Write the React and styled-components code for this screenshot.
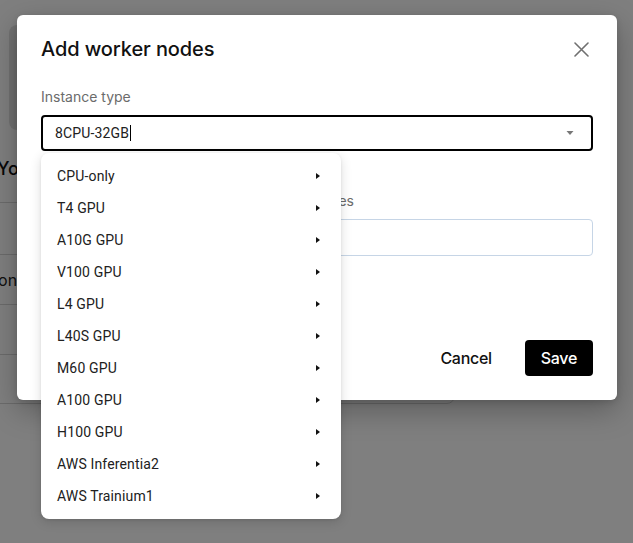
import React from "react";
import styled, { createGlobalStyle } from "styled-components";

const GlobalStyle = createGlobalStyle`
  html, body { margin: 0; padding: 0; }
  body {
    font-family: Inter, "Noto Sans", "Liberation Sans", sans-serif;
    background: #ffffff;
    color: #1a1a1a;
    -webkit-font-smoothing: antialiased;
  }
  * { box-sizing: border-box; }
`;

const Page = styled.div`
  position: relative;
  width: 633px;
  height: 543px;
  overflow: hidden;
  background: #ffffff;
`;

const Backdrop = styled.div`
  display: flex;
  flex-direction: column;
  padding-top: 25px;
`;

const BgCard = styled.div`
  margin-left: 9px;
  width: 300px;
  height: 105px;
  border-radius: 8px;
  background: #e3e3e3;
`;

const BgHeading = styled.h2`
  margin: 27px 0 0 -3px;
  font-size: 18px;
  line-height: 24px;
  font-weight: 500;
  color: #111;
`;

const BgTable = styled.div`
  margin: 21px 0 0 -40px;
  width: 495px;
  border: 1px solid #d6d6d6;
  border-radius: 8px;
  display: flex;
  flex-direction: column;
`;

const BgRow = styled.div`
  height: ${(p) => p.$h}px;
  display: flex;
  align-items: center;
  padding-left: 4px;
  font-size: 16px;
  color: #222;
  border-top: ${(p) => (p.$first ? "none" : "1px solid #d6d6d6")};
`;

const Overlay = styled.div`
  position: absolute;
  inset: 0;
  background: rgba(0, 0, 0, 0.5);
  padding: 15px 0 0 17px;
`;

const Dialog = styled.div`
  position: relative;
  width: 600px;
  background: #ffffff;
  border-radius: 6px;
  box-shadow: 0 10px 30px rgba(0, 0, 0, 0.28), 0 2px 6px rgba(0, 0, 0, 0.12);
  padding: 20px 24px 24px 24px;
  display: flex;
  flex-direction: column;
`;

const Header = styled.div`
  display: flex;
  align-items: center;
  justify-content: space-between;
  height: 28px;
`;

const Title = styled.h1`
  margin: 0;
  font-size: 20px;
  line-height: 28px;
  font-weight: 500;
  color: #111;
  letter-spacing: -0.1px;
`;

const CloseButton = styled.button`
  border: none;
  background: none;
  padding: 0;
  width: 24px;
  height: 24px;
  display: flex;
  align-items: center;
  justify-content: center;
  color: #707070;
  cursor: pointer;
`;

const Field = styled.div`
  display: flex;
  flex-direction: column;
  gap: 8px;
  margin-top: ${(p) => p.$mt}px;
  position: relative;
`;

const Label = styled.label`
  font-size: 14px;
  line-height: 20px;
  color: #6b6b6b;
`;

const SelectBox = styled.div`
  height: 36px;
  border: 2px solid #000;
  border-radius: 4px;
  display: flex;
  align-items: center;
  justify-content: space-between;
  padding: 0 17px 0 12px;
  font-family: Roboto, "Liberation Sans", sans-serif;
  font-size: 14px;
  letter-spacing: 0.15px;
  color: #212121;
`;

const SelectValue = styled.span`
  display: flex;
  align-items: center;
`;

const Caret = styled.span`
  display: inline-block;
  width: 1px;
  height: 16px;
  background: #000;
  margin-left: 1px;
`;

const TextInput = styled.div`
  height: 37px;
  border: 1px solid #c6d5e6;
  border-radius: 4px;
`;

const Footer = styled.div`
  display: flex;
  justify-content: flex-end;
  gap: 16px;
  margin-top: 84px;
`;

const Button = styled.button`
  height: 36px;
  padding: 0 ${(p) => (p.$primary ? 16 : 17)}px;
  border-radius: 4px;
  border: none;
  font-family: Inter, "Liberation Sans", sans-serif;
  font-size: 16px;
  font-weight: 500;
  letter-spacing: -0.3px;
  background: ${(p) => (p.$primary ? "#000" : "transparent")};
  color: ${(p) => (p.$primary ? "#fff" : "#111")};
  cursor: pointer;
`;

const Menu = styled.div`
  position: absolute;
  left: 0;
  top: 66px;
  width: 300px;
  background: #fff;
  border-radius: 8px;
  box-shadow: 0 3px 12px rgba(0, 0, 0, 0.14), 0 1px 3px rgba(0, 0, 0, 0.08);
  padding: 7px 0 7px;
  display: flex;
  flex-direction: column;
  z-index: 5;
`;

const MenuItem = styled.div`
  height: 32px;
  display: flex;
  align-items: center;
  justify-content: space-between;
  padding: 0 21px 0 16px;
  font-family: Roboto, "Liberation Sans", sans-serif;
  font-size: 14px;
  letter-spacing: 0.15px;
  color: #212121;
`;

const SubArrow = styled.span`
  width: 0;
  height: 0;
  border-left: 4px solid #111;
  border-top: 3.5px solid transparent;
  border-bottom: 3.5px solid transparent;
`;

const items = [
  "CPU-only",
  "T4 GPU",
  "A10G GPU",
  "V100 GPU",
  "L4 GPU",
  "L40S GPU",
  "M60 GPU",
  "A100 GPU",
  "H100 GPU",
  "AWS Inferentia2",
  "AWS Trainium1",
];

const CloseIcon = () => (
  <svg width="15" height="15" viewBox="0 0 15 15" fill="none">
    <path d="M1 1 L14 14 M14 1 L1 14" stroke="currentColor" strokeWidth="1.6" strokeLinecap="round" />
  </svg>
);

const DropIcon = () => (
  <svg width="8" height="4" viewBox="0 0 8 4">
    <path d="M0.5 0 L7.5 0 L4 4 Z" fill="#777" />
  </svg>
);

export default function App() {
  return (
    <>
      <GlobalStyle />
      <Page>
        <Backdrop>
          <BgCard />
          <BgHeading>Your clusters</BgHeading>
          <BgTable>
            <BgRow $first $h={51} />
            <BgRow $h={50}>Region</BgRow>
            <BgRow $h={50} />
            <BgRow $h={49} />
          </BgTable>
        </Backdrop>
        <Overlay>
          <Dialog>
            <Header>
              <Title>Add worker nodes</Title>
              <CloseButton aria-label="Close">
                <CloseIcon />
              </CloseButton>
            </Header>
            <Field $mt={24}>
              <Label>Instance type</Label>
              <SelectBox>
                <SelectValue>
                  8CPU-32GB
                  <Caret />
                </SelectValue>
                <DropIcon />
              </SelectBox>
              <Menu>
                {items.map((it) => (
                  <MenuItem key={it}>
                    {it}
                    <SubArrow />
                  </MenuItem>
                ))}
              </Menu>
            </Field>
            <Field $mt={40}>
              <Label>Number of nodes to add across selected zones</Label>
              <TextInput />
            </Field>
            <Footer>
              <Button>Cancel</Button>
              <Button $primary>Save</Button>
            </Footer>
          </Dialog>
        </Overlay>
      </Page>
    </>
  );
}
